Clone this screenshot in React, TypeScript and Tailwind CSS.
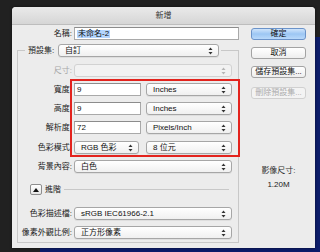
import React from "react";

const font = { fontFamily: '"Liberation Sans", "Noto Sans CJK TC", sans-serif' };

function Arrows({ dim = false }: { dim?: boolean }) {
  const c = dim ? "#b5b5b5" : "#333";
  return (
    <svg width="5" height="8" viewBox="0 0 5 8" className="shrink-0">
      <path d="M2.5 0.5 L4.5 3 L0.5 3 Z" fill={c} />
      <path d="M2.5 7.5 L4.5 5 L0.5 5 Z" fill={c} />
    </svg>
  );
}

function Select({ w, text, dim = false }: { w: string; text?: string; dim?: boolean }) {
  return (
    <div
      className={`${w} h-[13px] flex items-center justify-between pl-[6px] pr-[5px] rounded-[3px] border ${
        dim
          ? "border-[#d2d2d2] bg-[#f2f2f2] text-[#aaa]"
          : "border-[#a6a6a6] bg-gradient-to-b from-[#ffffff] to-[#f0f0f0] text-[#111] shadow-[0_1px_0_rgba(0,0,0,0.06)]"
      }`}
    >
      <span className="leading-none whitespace-nowrap">{text}</span>
      <Arrows dim={dim} />
    </div>
  );
}

function Input({ w, text }: { w: string; text: string }) {
  return (
    <div className={`${w} h-[13px] flex items-center pl-[2px] bg-white border border-[#a9a9a9] border-t-[#8c8c8c] text-[#111]`}>
      <span className="leading-none">{text}</span>
    </div>
  );
}

function Label({ w, text, dim = false }: { w: string; text: string; dim?: boolean }) {
  return (
    <div className={`${w} shrink-0 text-right pr-[2px] leading-none whitespace-nowrap ${dim ? "text-[#a8a8a8]" : "text-[#222]"}`}>
      {text}
    </div>
  );
}

function Btn({ text, primary = false, dim = false }: { text: string; primary?: boolean; dim?: boolean }) {
  return (
    <div
      className={`w-[55px] h-[12px] flex items-center justify-center rounded-[3px] border leading-none ${
        primary
          ? "border-[#6b93c9] bg-gradient-to-b from-[#cfe4fb] via-[#9cc6f3] to-[#b9d9fa] text-[#111]"
          : dim
          ? "border-[#d0d0d0] bg-[#f3f3f3] text-[#ababab]"
          : "border-[#a3a3a3] bg-gradient-to-b from-[#ffffff] to-[#eeeeee] text-[#111]"
      }`}
    >
      {text}
    </div>
  );
}

export default function App() {
  return (
    <div className="relative w-[320px] h-[252px] bg-[#212121] overflow-hidden text-[8px]" style={font}>
      <div className="absolute left-[300px] top-[37px] w-[20px] h-[215px] bg-[#0d1d6a]" />
      <div className="absolute left-[40px] top-[246px] w-[280px] h-[6px] bg-[#0d1d6a]" />

      <div className="absolute left-[12px] top-[7px] w-[303px] h-[241px] bg-[#ececec] rounded-t-[4px] shadow-[0_0_3px_rgba(0,0,0,0.6)] flex flex-col overflow-hidden">
        {/* title bar */}
        <div className="h-[18px] shrink-0 flex items-center justify-center bg-gradient-to-b from-[#eaeaea] to-[#d6d6d6] border-b border-[#bdbdbd] text-[#333] leading-none">
          新增
        </div>

        <div className="flex flex-1">
          {/* left column */}
          <div className="w-[228px] shrink-0 flex flex-col">
            {/* name row */}
            <div className="mt-[2px] flex items-center h-[13px]">
              <Label w="w-[62px]" text="名稱:" />
              <div className="w-[165px] h-[13px] flex items-center pl-[2px] bg-white border border-[#a9a9a9] border-t-[#8c8c8c] text-[#111]">
                <span className="leading-none bg-[#b4d5fe] px-[1px]">未命名-2</span>
              </div>
            </div>

            {/* group box */}
            <div className="mt-[10px] ml-[5px] w-[222px] h-[193px] border border-[#c8c8c8] flex flex-col">
              {/* preset row over top line */}
              <div className="-mt-[7px] ml-[7px] w-[196px] h-[13px] bg-[#ececec] flex items-center">
                <div className="w-[33px] pl-[3px] leading-none text-[#222] whitespace-nowrap">預設集:</div>
                <Select w="w-[161px]" text="自訂" />
              </div>

              <div className="mt-[7px] flex items-center">
                <Label w="w-[56px]" text="尺寸:" dim />
                <Select w="w-[158px]" dim />
              </div>

              <div className="mt-[6px] flex items-center">
                <Label w="w-[56px]" text="寬度:" />
                <Input w="w-[67px]" text="9" />
                <div className="w-[5px]" />
                <Select w="w-[86px]" text="Inches" />
              </div>

              <div className="mt-[6px] flex items-center">
                <Label w="w-[56px]" text="高度:" />
                <Input w="w-[67px]" text="9" />
                <div className="w-[5px]" />
                <Select w="w-[86px]" text="Inches" />
              </div>

              <div className="mt-[6px] flex items-center">
                <Label w="w-[56px]" text="解析度:" />
                <Input w="w-[67px]" text="72" />
                <div className="w-[5px]" />
                <Select w="w-[86px]" text="Pixels/Inch" />
              </div>

              <div className="mt-[7px] flex items-center">
                <Label w="w-[56px]" text="色彩模式:" />
                <Select w="w-[65px]" text="RGB 色彩" />
                <div className="w-[7px]" />
                <Select w="w-[86px]" text="8 位元" />
              </div>

              <div className="mt-[6px] flex items-center">
                <Label w="w-[56px]" text="背景內容:" />
                <Select w="w-[158px]" text="白色" />
              </div>

              {/* advanced */}
              <div className="mt-[11px] flex items-center h-[11px]">
                <div className="ml-[12px] w-[12px] h-[11px] rounded-[2px] border border-[#8d8d8d] bg-gradient-to-b from-white to-[#e6e6e6] flex items-center justify-center">
                  <svg width="6" height="4" viewBox="0 0 6 4">
                    <path d="M3 0 L6 4 L0 4 Z" fill="#111" />
                  </svg>
                </div>
                <div className="ml-[3px] leading-none text-[#222]">進階</div>
                <div className="ml-[3px] w-[165px] h-px bg-[#c8c8c8]" />
              </div>

              <div className="mt-[12px] flex items-center">
                <Label w="w-[56px]" text="色彩描述檔:" />
                <Select w="w-[158px]" text="sRGB IEC61966-2.1" />
              </div>

              <div className="mt-[6px] flex items-center">
                <Label w="w-[56px]" text="像素外觀比例:" />
                <Select w="w-[158px]" text="正方形像素" />
              </div>
            </div>
          </div>

          {/* right column */}
          <div className="flex-1 flex flex-col items-start pl-[11px]">
            <div className="mt-[3px]"><Btn text="確定" primary /></div>
            <div className="mt-[7px]"><Btn text="取消" /></div>
            <div className="mt-[7px]"><Btn text="儲存預設集..." /></div>
            <div className="mt-[9px]"><Btn text="刪除預設集..." dim /></div>
            <div className="mt-[68px] w-[55px] text-center leading-none text-[#333]">影像尺寸:</div>
            <div className="mt-[6px] w-[55px] text-center leading-none text-[#222]">1.20M</div>
          </div>
        </div>
      </div>

      {/* red annotation box */}
      <div className="absolute left-[70px] top-[79px] w-[170px] h-[78px] border-2 border-[#e3231d]" />
    </div>
  );
}
